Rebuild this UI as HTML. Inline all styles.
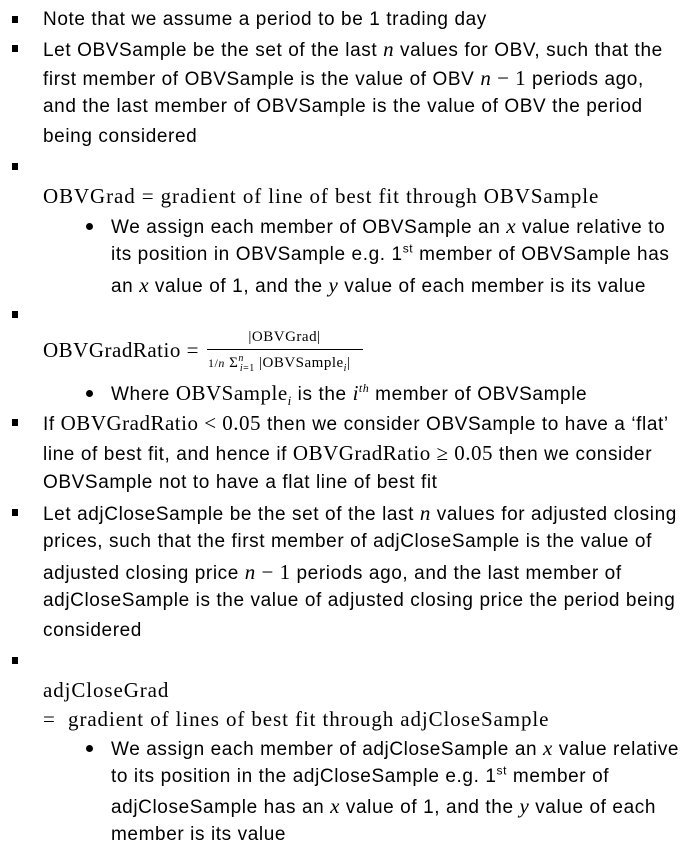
<!DOCTYPE html>
<html><head><meta charset="utf-8"><style>
body{margin:0;width:698px;height:852px;background:#fff;position:relative;overflow:hidden;color:#000;font-family:"Liberation Sans",sans-serif;font-size:19px;letter-spacing:0.6px}
.l{position:absolute;white-space:nowrap;line-height:20px}
.sq{position:absolute;left:12px;width:6px;height:7px;background:#000}
.dt{position:absolute;left:86px;width:7px;height:7px;border-radius:50%;background:#000}
.m{font-family:"Liberation Serif",serif;font-size:21px;letter-spacing:0.5px;line-height:20px}
.w{letter-spacing:0.9px}
.m i{font-family:"Liberation Serif",serif}
sup{font-size:12px;line-height:0}
sub{line-height:0}
</style></head><body>
<div class="sq" style="top:16px"></div><div class="l" style="left:43px;top:10px">Note that we assume a period to be 1 trading day</div>
<div class="sq" style="top:45px"></div><div class="l" style="left:43px;top:39px">Let OBVSample be the set of the last <span class="m"><i>n</i></span> values for OBV, such that the</div>
<div class="l" style="left:43px;top:68px">first member of OBVSample is the value of OBV <span class="m"><i>n</i> − 1</span> periods ago,</div>
<div class="l" style="left:43px;top:97px">and the last member of OBVSample is the value of OBV the period</div>
<div class="l" style="left:43px;top:127px">being considered</div>
<div class="sq" style="top:163px"></div>
<div class="l m w" style="left:43px;top:186px">OBVGrad = gradient of line of best fit through OBVSample</div>
<div class="dt" style="top:223px"></div><div class="l" style="left:111px;top:216px">We assign each member of OBVSample an <span class="m"><i>x</i></span> value relative to</div>
<div class="l" style="left:111px;top:245px">its position in OBVSample e.g. 1<sup>st</sup> member of OBVSample has</div>
<div class="l" style="left:111px;top:275px">an <span class="m"><i>x</i></span> value of 1, and the <span class="m"><i>y</i></span> value of each member is its value</div>
<div class="sq" style="top:311px"></div>
<div class="l m" style="left:43px;top:340px">OBVGradRatio =</div>
<div class="l m" style="left:207px;top:327px;font-size:15px;width:155px;text-align:center">|OBVGrad|</div>
<div style="position:absolute;left:207px;top:349px;width:156px;height:1px;background:#000"></div>
<div class="l m" style="left:208px;top:353px;font-size:15px"><span style="font-size:12px">1/<i>n</i></span> Σ<sup style="font-size:10px"><i>n</i></sup><sub style="font-size:10px;margin-left:-4px"><i>i</i>=1</sub> |OBVSample<sub style="font-size:10px"><i>i</i></sub>|</div>
<div class="dt" style="top:390px"></div><div class="l" style="left:111px;top:383px">Where <span class="m">OBVSample<sub style="font-size:13px"><i>i</i></sub></span> is the <span class="m"><i>i<sup>th</sup></i></span> member of OBVSample</div>
<div class="sq" style="top:419px"></div><div class="l" style="left:43px;top:413px">If <span class="m">OBVGradRatio &lt; 0.05</span> then we consider OBVSample to have a ‘flat’</div>
<div class="l" style="left:43px;top:443px">line of best fit, and hence if <span class="m">OBVGradRatio ≥ 0.05</span> then we consider</div>
<div class="l" style="left:43px;top:473px">OBVSample not to have a flat line of best fit</div>
<div class="sq" style="top:509px"></div><div class="l" style="left:43px;top:503px">Let adjCloseSample be the set of the last <span class="m"><i>n</i></span> values for adjusted closing</div>
<div class="l" style="left:43px;top:532px">prices, such that the first member of adjCloseSample is the value of</div>
<div class="l" style="left:43px;top:562px">adjusted closing price <span class="m"><i>n</i> − 1</span> periods ago, and the last member of</div>
<div class="l" style="left:43px;top:591px">adjCloseSample is the value of adjusted closing price the period being</div>
<div class="l" style="left:43px;top:621px">considered</div>
<div class="sq" style="top:657px"></div>
<div class="l m w" style="left:43px;top:680px">adjCloseGrad</div>
<div class="l m w" style="left:43px;top:709px">= &nbsp;gradient of lines of best fit through adjCloseSample</div>
<div class="dt" style="top:745px"></div><div class="l" style="left:111px;top:738px">We assign each member of adjCloseSample an <span class="m"><i>x</i></span> value relative</div>
<div class="l" style="left:111px;top:767px">to its position in the adjCloseSample e.g. 1<sup>st</sup> member of</div>
<div class="l" style="left:111px;top:796px">adjCloseSample has an <span class="m"><i>x</i></span> value of 1, and the <span class="m"><i>y</i></span> value of each</div>
<div class="l" style="left:111px;top:825px">member is its value</div>
</body></html>
